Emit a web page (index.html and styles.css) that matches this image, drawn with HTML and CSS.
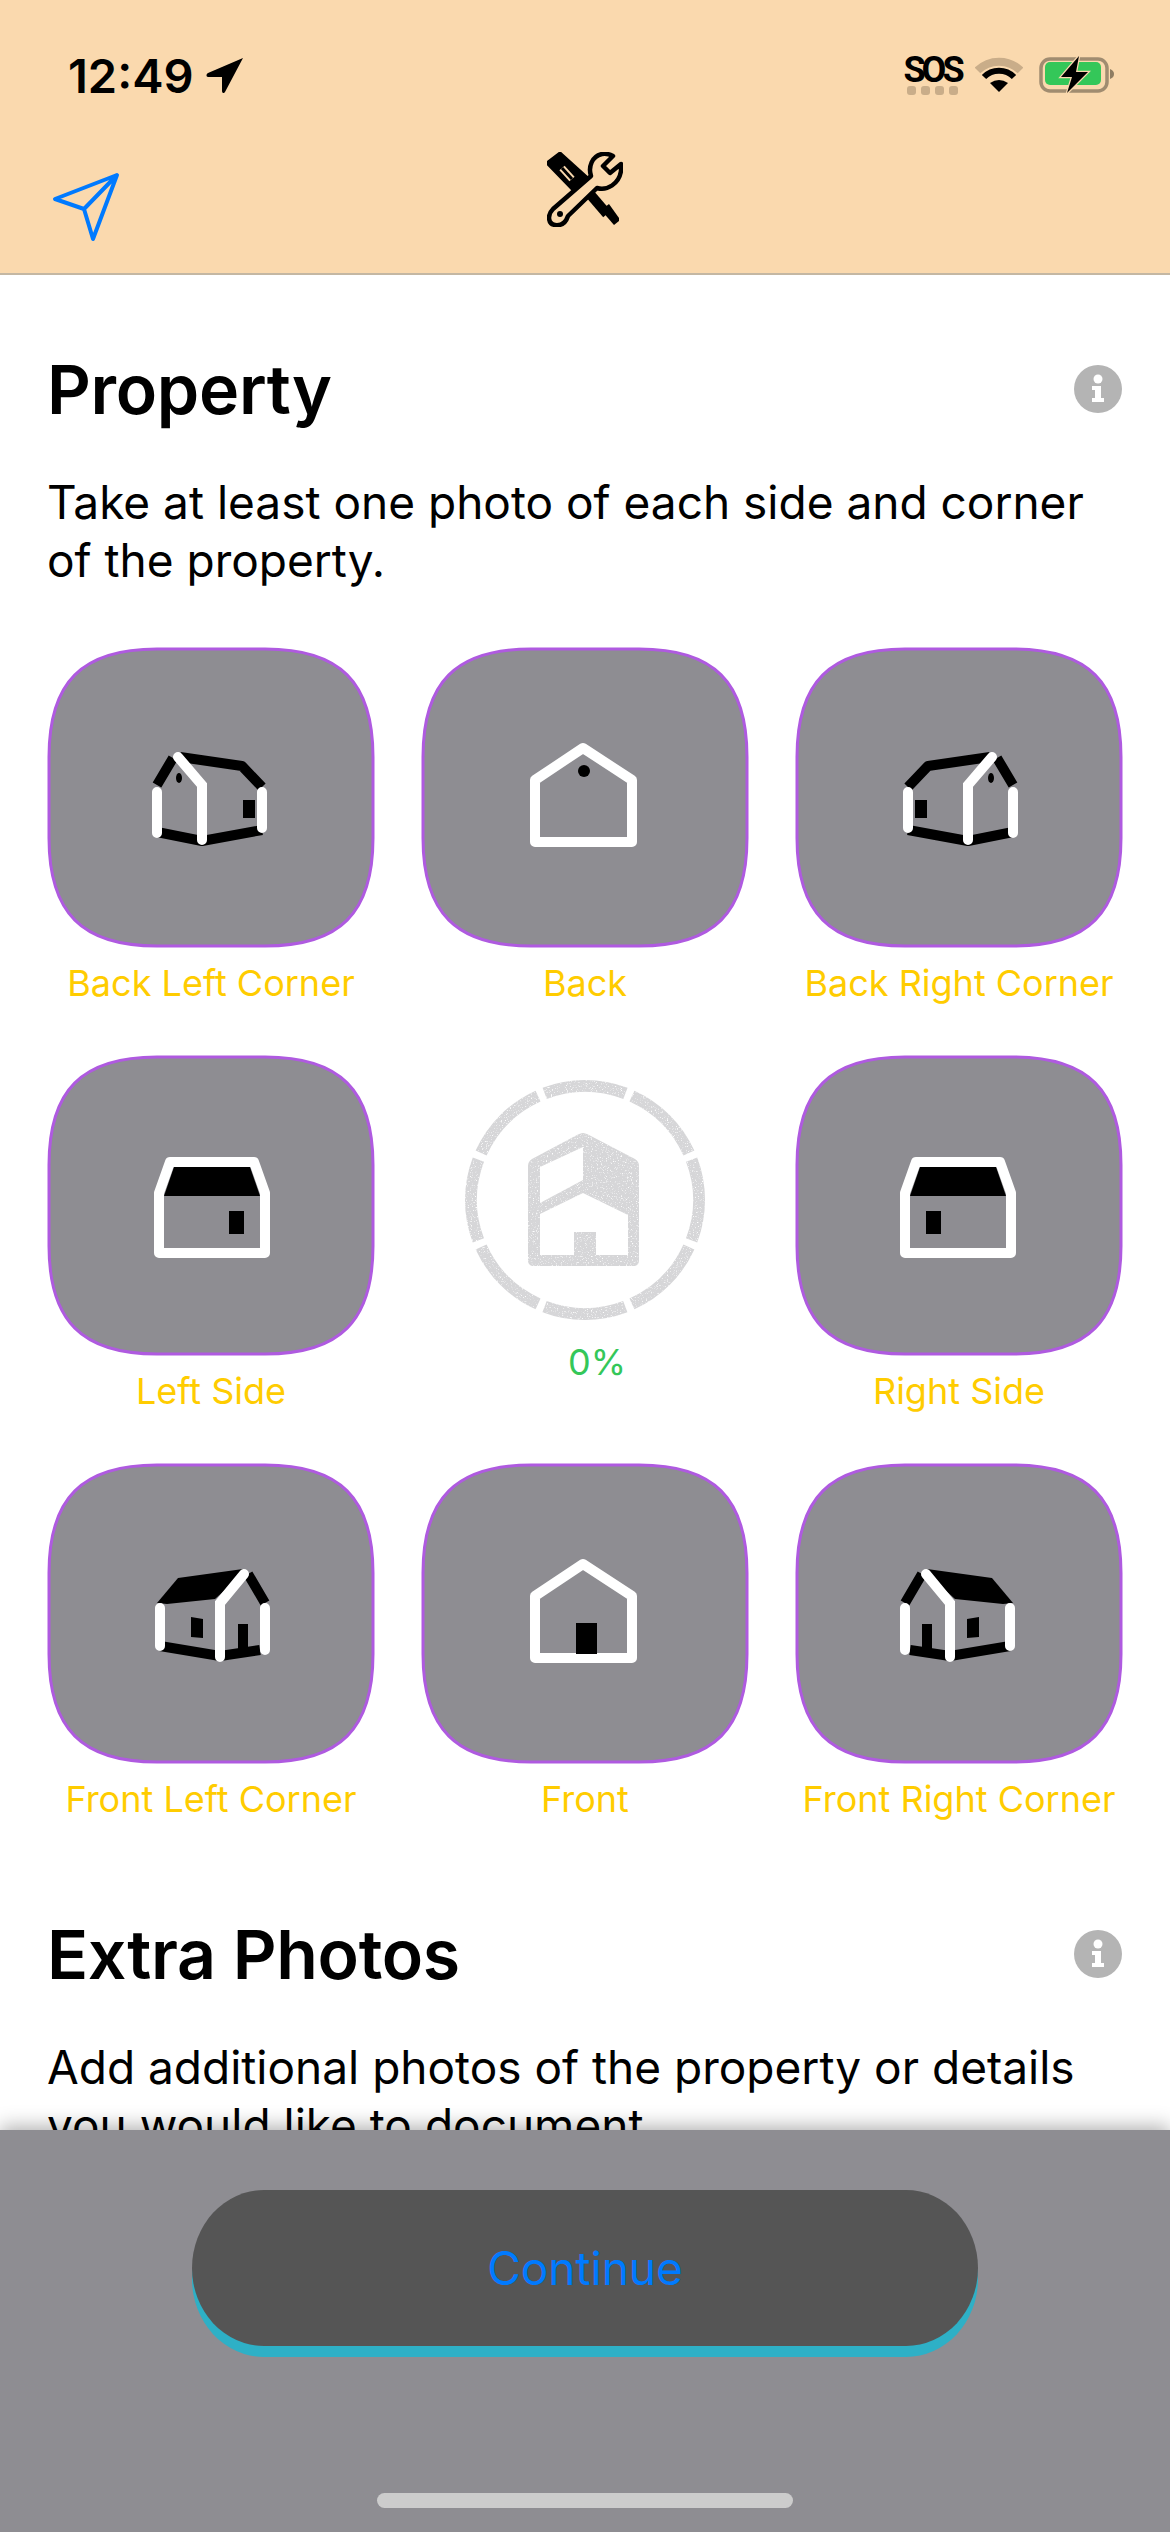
FILE: index.html
```html
<!DOCTYPE HTML>
<html>

<head>
  <meta charset="utf-8">
  <title>Property</title>
  <link rel="stylesheet" href="styles.css">
</head>

<body>
  <!-- shared shapes -->
  <svg class="sprites" width="0" height="0">
    <defs>
      <path id="squircle" d="M110 2H218C293 2 326 35 326 110V191C326 266 293 299 218 299H110C35 299 2 266 2 191V110C2 35 35 2 110 2Z" />
      <filter id="speckle" x="0" y="0" width="100%" height="100%">
        <feTurbulence type="fractalNoise" baseFrequency="0.8" numOctaves="2" seed="4" />
        <feColorMatrix values="0 0 0 0 1  0 0 0 0 1  0 0 0 0 1  0 0 0 4 -2.3" />
        <feComposite in2="SourceGraphic" operator="in" result="dots" />
        <feMerge>
          <feMergeNode in="SourceGraphic" />
          <feMergeNode in="dots" />
        </feMerge>
      </filter>
      <g id="backCorner">
        <path class="ink" d="M126 111L110 138M133 110L195 119L215 140M110 185L155 194L215 183" />
        <rect x="196" y="153" width="12" height="18" />
        <ellipse cx="132" cy="131" rx="3" ry="5" />
        <path class="chalk" d="M110 145V186M215 145V181M131 110L155 138V193" />
      </g>
      <g id="frontCorner">
        <path d="M132 106L197 115L218 140L208 141L160 136L140 118Z" />
        <path class="ink" d="M127 111L110 140M115 187L155 193L215 183" />
        <rect x="127" y="161" width="10" height="26" />
        <path d="M172 156L184 154V174L172 175Z" />
        <path class="chalk" d="M110 145V187M215 145V183M131 111L155 140V194" />
      </g>
      <g id="sideWall">
        <path d="M127 112H203L213 141H117Z" />
        <rect x="182" y="156" width="15" height="23" />
        <path class="chalk chalk-round" d="M112 138L123 107H207L218 138V198H112Z" />
      </g>
      <path id="endWall" class="chalk chalk-round" d="M114 133L162 101L211 133V195H114Z" />
    </defs>
  </svg>

  <div class="screen">
    <header class="topbar">
      <div class="statusbar">
        <div class="clock">
          <span>12:49</span>
          <svg class="clock-arrow" width="38" height="37" viewBox="0 0 38 37">
            <path d="M37 1L19 35C18 37 16 36 16 34V20H2C0 20 0 17 2 16Z" />
          </svg>
        </div>
        <div class="status-icons">
          <div class="sos">
            <span>SOS</span>
            <div class="sos-dots"><i></i><i></i><i></i><i></i></div>
          </div>
          <svg width="48" height="36" viewBox="0 0 48 36">
            <path class="wifi-off" d="M2.500 13.500A30.500 30.500 0 0 1 45.500 13.500" />
            <path class="wifi-on" d="M9 20A21 21 0 0 1 39 20" />
            <path d="M24 35L15 26Q24 20 33 26Z" />
          </svg>
          <svg width="76" height="38" viewBox="0 0 76 38">
            <rect class="batt-case" x="2" y="3" width="66" height="32" rx="9" />
            <rect class="batt-level" x="6" y="6" width="56" height="23" rx="5" />
            <path class="batt-nub" d="M71 13C74 14 75 16 75 18C75 20 74 22 71 23Z" />
            <path class="batt-bolt" d="M40 0L22 21H33L28 37L49 16H37Z" />
          </svg>
        </div>
      </div>
      <div class="toolbar">
        <svg class="send-icon" width="68" height="70" viewBox="0 0 68 70">
          <path d="M65 3L3 27L32 37L41 67ZM32 37L65 3" />
        </svg>
        <svg class="tools-icon" width="76" height="75" viewBox="0 0 76 75">
          <path d="M13 1L0 11L28 40L43 28Z" class="tool-grip" />
          <path class="tool-slot" d="M15 16L25 27" />
          <path class="tool-slot-core" d="M15 16L25 27" />
          <path class="tool-shaft" d="M36 34L60 62" />
          <path d="M54 58L62 52L72 66V69L67 73Z" />
          <path class="tool-wrench" d="M55 2C45 4 41 15 44 24L6 57C0 63 1 72 8 73C15 74 19 70 21 64L50 36C60 39 72 32 74 19V12L63 21L56 14L66 4C62 2 59 1 55 2Z" />
          <circle cx="13" cy="62" r="3" />
        </svg>
      </div>
    </header>

    <main class="content">
      <div class="section-head">
        <h2>Property</h2>
        <svg width="48" height="48" viewBox="0 0 48 48">
          <circle class="info-disc" cx="24" cy="24" r="24" />
          <circle class="info-mark" cx="24" cy="14" r="4.500" />
          <path class="info-mark" d="M18 21H27V33H30V37H18V33H21V25H18Z" />
        </svg>
      </div>
      <p class="section-text">Take at least one photo of each side and corner of the property.</p>

      <div class="shots">
        <div class="shot">
          <svg class="tile" width="328" height="301" viewBox="0 0 328 301">
            <use class="tile-shape" href="#squircle" />
            <use href="#backCorner" />
          </svg>
          <span>Back Left Corner</span>
        </div>
        <div class="shot">
          <svg class="tile" width="328" height="301" viewBox="0 0 328 301">
            <use class="tile-shape" href="#squircle" />
            <use href="#endWall" />
            <circle cx="163" cy="124" r="6" />
          </svg>
          <span>Back</span>
        </div>
        <div class="shot">
          <svg class="tile" width="328" height="301" viewBox="0 0 328 301">
            <use class="tile-shape" href="#squircle" />
            <use href="#backCorner" transform="translate(328 0) scale(-1 1)" />
          </svg>
          <span>Back Right Corner</span>
        </div>

        <div class="shot">
          <svg class="tile" width="328" height="301" viewBox="0 0 328 301">
            <use class="tile-shape" href="#squircle" />
            <use href="#sideWall" />
          </svg>
          <span>Left Side</span>
        </div>
        <div class="shot progress">
          <svg width="240" height="240" viewBox="0 0 240 240">
            <g filter="url(#speckle)">
              <circle class="progress-ring" cx="120" cy="120" r="114" pathLength="80" transform="rotate(24.300 120 120)" />
              <path class="progress-house" fill-rule="evenodd" d="M118 53C120 53 122 54 124 55L170 79C173 81 174 83 174 86V180C174 184 172 186 168 186H69C65 186 63 184 63 180V86C63 83 64 81 67 79L112 55C114 54 116 53 118 53ZM75 87V123L118 100V67ZM75 134V175H109V152H131V175H163V135L118 113Z" />
            </g>
          </svg>
          <span>0%</span>
        </div>
        <div class="shot">
          <svg class="tile" width="328" height="301" viewBox="0 0 328 301">
            <use class="tile-shape" href="#squircle" />
            <use href="#sideWall" transform="translate(328 0) scale(-1 1)" />
          </svg>
          <span>Right Side</span>
        </div>

        <div class="shot">
          <svg class="tile" width="328" height="301" viewBox="0 0 328 301">
            <use class="tile-shape" href="#squircle" />
            <use href="#frontCorner" transform="translate(328 0) scale(-1 1)" />
          </svg>
          <span>Front Left Corner</span>
        </div>
        <div class="shot">
          <svg class="tile" width="328" height="301" viewBox="0 0 328 301">
            <use class="tile-shape" href="#squircle" />
            <use href="#endWall" />
            <rect x="155" y="160" width="21" height="31" />
          </svg>
          <span>Front</span>
        </div>
        <div class="shot">
          <svg class="tile" width="328" height="301" viewBox="0 0 328 301">
            <use class="tile-shape" href="#squircle" />
            <use href="#frontCorner" />
          </svg>
          <span>Front Right Corner</span>
        </div>
      </div>

      <div class="section-head section-extra">
        <h2>Extra Photos</h2>
        <svg width="48" height="48" viewBox="0 0 48 48">
          <circle class="info-disc" cx="24" cy="24" r="24" />
          <circle class="info-mark" cx="24" cy="14" r="4.500" />
          <path class="info-mark" d="M18 21H27V33H30V37H18V33H21V25H18Z" />
        </svg>
      </div>
      <p class="section-text">Add additional photos of the property or details you would like to document.</p>
    </main>

    <footer class="bottom-panel">
      <button class="continue-btn">Continue</button>
      <div class="home-bar"></div>
    </footer>
  </div>
</body>

</html>
```

FILE: styles.css
```css
* {
  margin: 0;
  padding: 0;
  box-sizing: border-box;
}

body {
  font-family: Inter, "Noto Sans", sans-serif;
  color: #000;
  background: #fff;
}

.sprites {
  display: block;
  height: 0;
}

.screen {
  width: 1170px;
  height: 2532px;
  display: flex;
  flex-direction: column;
  overflow: hidden;
}

/* top bar */
.topbar {
  height: 275px;
  background: #fad9ae;
  border-bottom: 2px solid #c4b7a3;
  flex: none;
}

.statusbar {
  height: 150px;
  padding: 0 55px 0 68px;
  display: flex;
  justify-content: space-between;
  align-items: center;
}

.clock {
  display: flex;
  align-items: center;
  gap: 12px;
  font-size: 47px;
  font-weight: 600;
}

.status-icons {
  display: flex;
  align-items: center;
  gap: 16px;
}

.sos {
  width: 54px;
  display: flex;
  flex-direction: column;
  align-items: center;
  font-family: Roboto, sans-serif;
  font-size: 36px;
  font-weight: 700;
  letter-spacing: -4px;
  line-height: 28px;
}

.sos-dots {
  display: flex;
  gap: 5px;
  margin-top: 2px;
}

.sos-dots i {
  width: 9px;
  height: 9px;
  border-radius: 3px;
  background: #c9ad89;
}

.wifi-off,
.wifi-on {
  fill: none;
}

.wifi-off {
  stroke: #c9ad89;
  stroke-width: 8;
}

.wifi-on {
  stroke: #000;
  stroke-width: 6;
}

.batt-case {
  fill: none;
  stroke: #a08c70;
  stroke-width: 3.5;
}

.batt-level {
  fill: #34c759;
}

.batt-nub {
  fill: #8f7d62;
}

.batt-bolt {
  stroke: #fad9ae;
  stroke-width: 2.5;
  paint-order: stroke;
}

.toolbar {
  height: 123px;
  padding: 0 52px;
  display: grid;
  grid-template-columns: 1fr auto 1fr;
  align-items: start;
}

.send-icon {
  margin-top: 22px;
}

.send-icon path {
  fill: none;
  stroke: #007aff;
  stroke-width: 4;
  stroke-linejoin: round;
}

.tools-icon {
  margin-top: 2px;
}

.tool-slot,
.tool-slot-core {
  fill: none;
}

.tool-slot {
  stroke: #fad9ae;
  stroke-width: 7;
}

.tool-slot-core {
  stroke: #000;
  stroke-width: 3;
}

.tool-shaft {
  fill: none;
  stroke: #000;
  stroke-width: 10;
}

.tool-grip {
  stroke: #000;
  stroke-width: 3;
  stroke-linejoin: round;
}

.tool-wrench {
  fill: #fad9ae;
  stroke: #000;
  stroke-width: 4.500;
  stroke-linejoin: round;
}

/* scroll area */
.content {
  flex: 1;
  min-height: 0;
  overflow: hidden;
  padding: 74px 48px 0 47px;
}

.section-head {
  height: 80px;
  display: flex;
  justify-content: space-between;
  align-items: center;
}

.section-head h2 {
  font-size: 68px;
  font-weight: 600;
  letter-spacing: -0.3px;
}

.section-extra {
  margin-top: 93px;
}

.info-disc {
  fill: #b4b4b4;
}

.info-mark {
  fill: #fff;
}

.section-text {
  margin-top: 44px;
  font-size: 46px;
  line-height: 58px;
}

.shots {
  margin-top: 58px;
  display: grid;
  grid-template-columns: repeat(3, 328px);
  column-gap: 46px;
  row-gap: 50px;
}

.shot {
  display: flex;
  flex-direction: column;
  align-items: center;
}

.shot > span {
  margin-top: 13px;
  font-size: 36px;
  line-height: 44px;
  color: #ffcc00;
  white-space: nowrap;
}

.tile {
  display: block;
}

.tile-shape {
  fill: #8e8d92;
  stroke: #af5ae0;
  stroke-width: 3;
}

.ink {
  fill: none;
  stroke: #000;
  stroke-width: 10;
  stroke-linejoin: round;
}

.chalk {
  fill: none;
  stroke: #fff;
  stroke-width: 10;
  stroke-linecap: round;
}

.chalk-round {
  stroke-linejoin: round;
}

.progress {
  padding-top: 25px;
}

.shot.progress > span {
  margin: 20px 0 0 24px;
  color: #34c759;
}

.progress-ring {
  fill: none;
  stroke: #d6d6d8;
  stroke-width: 12;
  stroke-dasharray: 9.2 0.8;
}

.progress-house {
  fill: #d6d6d8;
}

/* bottom panel */
.bottom-panel {
  height: 402px;
  flex: none;
  position: relative;
  background: #8e8d92;
  box-shadow: 0 -4px 18px rgba(0, 0, 0, 0.3);
  display: flex;
  flex-direction: column;
  align-items: center;
  padding-top: 60px;
}

.continue-btn {
  width: 786px;
  height: 156px;
  border: 0;
  border-radius: 72px / 78px;
  background: #555;
  box-shadow: 0 11px 0 #2eb0c6;
  color: #007aff;
  font-family: inherit;
  font-size: 46px;
}

.home-bar {
  width: 416px;
  height: 15px;
  margin-top: 147px;
  border-radius: 8px;
  background: #ccc;
}
```
